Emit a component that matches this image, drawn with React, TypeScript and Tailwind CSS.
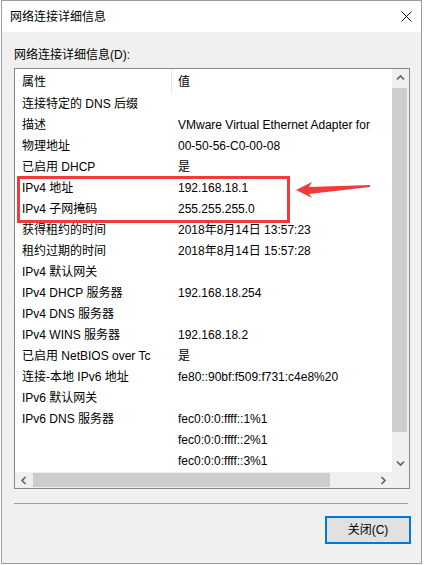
import React from "react";

const rows: [string, string][] = [
	["连接特定的 DNS 后缀", ""],
	["描述", "VMware Virtual Ethernet Adapter for"],
	["物理地址", "00-50-56-C0-00-08"],
	["已启用 DHCP", "是"],
	["IPv4 地址", "192.168.18.1"],
	["IPv4 子网掩码", "255.255.255.0"],
	["获得租约的时间", "2018年8月14日 13:57:23"],
	["租约过期的时间", "2018年8月14日 15:57:28"],
	["IPv4 默认网关", ""],
	["IPv4 DHCP 服务器", "192.168.18.254"],
	["IPv4 DNS 服务器", ""],
	["IPv4 WINS 服务器", "192.168.18.2"],
	["已启用 NetBIOS over Tc", "是"],
	["连接-本地 IPv6 地址", "fe80::90bf:f509:f731:c4e8%20"],
	["IPv6 默认网关", ""],
	["IPv6 DNS 服务器", "fec0:0:0:ffff::1%1"],
	["", "fec0:0:0:ffff::2%1"],
	["", "fec0:0:0:ffff::3%1"],
];

function Chevron({ dir }: { dir: "up" | "down" | "left" | "right" }) {
	const rot = { up: 0, right: 90, down: 180, left: 270 }[dir];
	return (
		<svg width="9" height="9" viewBox="0 0 9 9" style={{ transform: `rotate(${rot}deg)` }}>
			<path d="M1 6.5 L4.5 3 L8 6.5" fill="none" stroke="#606060" strokeWidth="1.6" />
		</svg>
	);
}

export default function App() {
	return (
		<div
			className="relative h-[565px] w-[424px] overflow-hidden bg-white pl-px text-[12px] text-black"
			style={{ fontFamily: '"Liberation Sans", "Noto Sans CJK SC", sans-serif' }}
		>
			<div className="flex h-[564px] w-[421px] flex-col border border-[#9c9c9c] bg-[#f0f0f0]">
				{/* title bar */}
				<div className="flex h-[31px] items-center justify-between bg-white pl-[8px] pr-[9px]">
					<span className="leading-4">网络连接详细信息</span>
					<svg width="11" height="11" viewBox="0 0 11 11">
						<path d="M0.5 0.5 L10.5 10.5 M10.5 0.5 L0.5 10.5" stroke="#111" strokeWidth="1" />
					</svg>
				</div>

				<div className="flex flex-col pl-[12px] pt-[15px]">
					<div className="leading-4">网络连接详细信息(D):</div>

					{/* list box */}
					<div className="mt-[5px] flex h-[421px] w-[396px] flex-col border border-[#828790] bg-white">
						<div className="flex h-[403px]">
							<div className="w-[377px] shrink-0 overflow-hidden">
								<div className="flex h-[25px] items-center">
									<div className="w-[156px] shrink-0 pl-[7px]">属性</div>
									<div className="h-[24px] w-px shrink-0 self-start bg-[#e5e5e5]" />
									<div className="pl-[6px]">值</div>
								</div>
								{rows.map(([k, v], i) => (
									<div key={i} className="flex h-[21px] items-center whitespace-nowrap leading-[21px]">
										<div className="w-[157px] shrink-0 pl-[7px]">{k}</div>
										<div className="shrink-0 pl-[6px]">{v}</div>
									</div>
								))}
							</div>
							<div className="flex w-[17px] shrink-0 flex-col bg-[#f0f0f0]">
								<div className="flex h-[17px] items-center justify-center">
									<Chevron dir="up" />
								</div>
								<div className="flex-1 pt-[2px]">
									<div className="h-[344px] w-[15px] bg-[#cdcdcd]" />
								</div>
								<div className="flex h-[17px] items-center justify-center">
									<Chevron dir="down" />
								</div>
							</div>
						</div>
						<div className="flex h-[16px] bg-[#f0f0f0]">
							<div className="flex w-[17px] items-center justify-center">
								<Chevron dir="left" />
							</div>
							<div className="flex w-[343px] items-center pl-px">
								<div className="h-[14px] w-[297px] bg-[#cdcdcd]" />
							</div>
							<div className="flex w-[17px] items-center justify-center">
								<Chevron dir="right" />
							</div>
							<div className="w-[17px]" />
						</div>
					</div>

					<div className="mt-[14px] h-px w-[394px] bg-[#a0a0a0]" />

					<button
						type="button"
						className="ml-[311px] mt-[12px] flex h-[28px] w-[86px] items-center justify-center border-2 border-[#0078d7] bg-[#e1e1e1]"
					>
						关闭(C)
					</button>
				</div>
			</div>

			{/* red annotation */}
			<div className="absolute left-[17px] top-[176px] h-[47px] w-[273px] border-[3px] border-[#ef3b3b]" />
			<svg className="absolute left-[290px] top-[178px]" width="90" height="24" viewBox="0 0 90 24">
				<polygon
					points="6,12 22,4 19,9 80,7 80,9 19,16 22,20"
					fill="#ef3b3b"
				/>
			</svg>
		</div>
	);
}
